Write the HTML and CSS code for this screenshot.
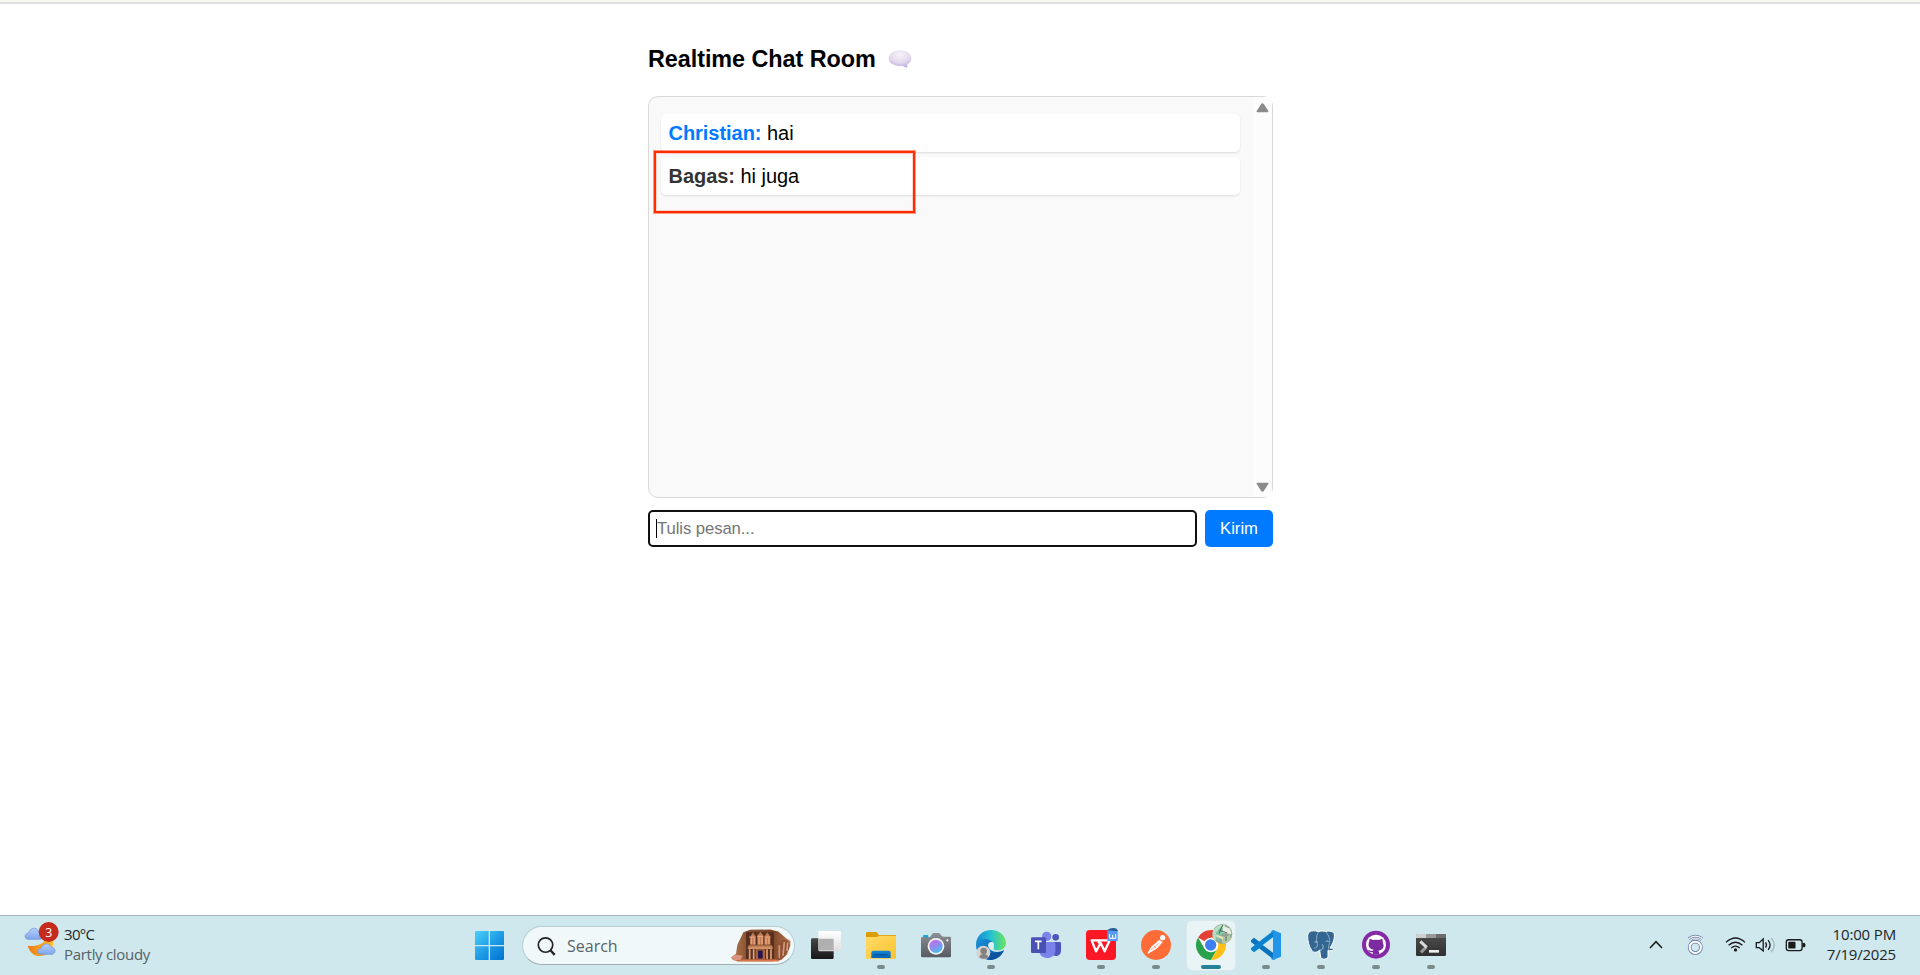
FILE: index.html
```
<!DOCTYPE html>
<html lang="id">
<head>
<meta charset="utf-8">
<title>Realtime Chat Room</title>
<link rel="stylesheet" href="styles.css">
</head>
<body>
<div class="browser-edge"></div>
<main class="page">
  <div class="room">
    <h3 class="title"><span class="title-text">Realtime Chat Room</span>
      <svg class="bubble" viewBox="0 0 72 56"><defs><radialGradient id="bub" cx=".5" cy=".25" r=".75"><stop offset="0" stop-color="#f7f2f8"/><stop offset=".6" stop-color="#e4daee"/><stop offset="1" stop-color="#bda9dc"/></radialGradient></defs><path d="M36 1C55 1 71 11 71 26c0 9-5 15-13 19l1 10c-7-1-11-3-15-6C20 52 1 42 1 26 1 11 17 1 36 1z" fill="url(#bub)"/></svg>
    </h3>
    <div class="chat">
      <div class="messages">
        <div class="message"><b class="own">Christian:</b> hai</div>
        <div class="message"><b>Bagas:</b> hi juga</div>
      </div>
      <div class="scrollbar">
        <svg viewBox="0 0 38 30" class="arrow"><path d="M3 28h32q3-1 1-5L23 3q-4-5-8 0L2 23q-2 4 1 5z"/></svg>
        <svg viewBox="0 0 38 30" class="arrow"><path d="M3 2h32q3 1 1 5L23 27q-4 5-8 0L2 7Q0 3 3 2z"/></svg>
      </div>
      <div class="highlight"></div>
    </div>
    <div class="composer">
      <div class="field"><span class="caret"></span><span class="placeholder">Tulis pesan...</span></div>
      <button class="send">Kirim</button>
    </div>
  </div>
</main>
<footer class="taskbar">
  <div class="weather">
    <svg class="weather-icon" viewBox="72 50 108 108"><defs><linearGradient id="cl" x2="0" y2="1"><stop stop-color="#b4d0fb"/><stop offset="1" stop-color="#7fa5ec"/></linearGradient><linearGradient id="mo" x2="1"><stop stop-color="#ee7a17"/><stop offset="1" stop-color="#ffc32e"/></linearGradient></defs>
      <path d="M83 124c16 4 42-2 50-14h26c4 30-20 48-44 45-16-2-27-14-32-31z" fill="url(#mo)"/>
      <path d="M84 105c-12-1-12-18 2-19 3-16 24-20 30-4 14 0 16 20 4 23z" fill="url(#cl)" stroke="#6a93dd" stroke-width="2"/>
      <path d="M122 150c-12-1-12-17 1-18 4-16 26-18 31-3 14 0 15 19 2 21z" fill="url(#cl)" stroke="#6a93dd" stroke-width="2"/>
      <circle cx="146" cy="83" r="30" fill="#c42b1c"/><text class="badge" x="146" y="97" text-anchor="middle">3</text></svg>
    <div class="weather-text"><span class="temp">30°C</span><span class="cond">Partly cloudy</span></div>
  </div>
  <div class="center">
    <svg class="start" viewBox="45 78 87 87"><defs><linearGradient id="win" gradientUnits="userSpaceOnUse" x1="45" y1="78" x2="132" y2="165"><stop stop-color="#4cd0fb"/><stop offset=".5" stop-color="#1f9de6"/><stop offset="1" stop-color="#0070d0"/></linearGradient></defs><path fill="url(#win)" d="M48 78h38v42H45V81q0-3 3-3zM90 78h39q3 0 3 3v39H90zM45 124h41v41H48q-3 0-3-3zM90 124h42v38q0 3-3 3H90z"/></svg>
    <div class="search">
      <svg class="lens" viewBox="226 90 58 60"><circle cx="252" cy="117" r="22" fill="none" stroke="#222" stroke-width="5"/><path d="M267 133l13 14" stroke="#222" stroke-width="7"/></svg>
      <span class="search-text">Search</span>
      <svg class="petra" viewBox="218 74 180 98"><defs><linearGradient id="rock" x2="1"><stop stop-color="#b77b50"/><stop offset=".25" stop-color="#8a5532"/><stop offset=".7" stop-color="#7b4527"/><stop offset="1" stop-color="#b87650"/></linearGradient></defs>
        <path d="M219 158l14-10 4-27 18-38 20-7 60-1 25 6 25 22 11 6v15l-10 26-16 16-26 4H236l-15-6z" fill="url(#rock)"/>
        <path d="M219 158l12-8 22 4-6 12-20 3z" fill="#dc9480"/>
        <path d="M263 82h84v82h-84z" fill="#57301f"/>
        <path d="M270 122h72v10h-72zM276 96l8-13 8 13v25h-16zM318 96l9-13 9 13v25h-18zM297 93l9-11 9 11v28h-18z" fill="#bf7a52"/>
        <path d="M268 131h75M273 98h18M297 96h18M320 98h16" stroke="#e6a67c" stroke-width="4"/>
        <path d="M274 134v30M286 134v30M326 134v30M338 134v30M279 101v18M288 101v18M302 100v20M311 100v20M323 101v18M332 101v18" stroke="#e3a078" stroke-width="5"/>
        <path d="M292 134h28v30h-28z" fill="#ad623c"/><path d="M299 138h14v24h-14z" fill="#24164c"/>
        <path d="M358 163l4-44 12-14 14 4 6 10-2 14-14 22z" fill="#8d5033"/><path d="M363 160v-38M374 154l4-42M386 140l2-26" stroke="#d59978" stroke-width="5"/>
        <path d="M252 165h100l14 3-6 3H236z" fill="#dc754a"/></svg>
    </div>
    <div class="apps">
      <div class="app idle"><svg viewBox="453 75 90 90"><defs><linearGradient id="tv" x2="0" y2="1"><stop stop-color="#454545"/><stop offset="1" stop-color="#181818"/></linearGradient><linearGradient id="tw" x2="0" y2="1"><stop stop-color="#fff"/><stop offset="1" stop-color="#dedede"/></linearGradient></defs><rect x="453" y="100" width="68" height="62" rx="4" fill="url(#tv)"/><rect x="475" y="78" width="68" height="61" rx="4" fill="url(#tw)"/><path d="M477 101h42q2 0 2 3v32h-44z" fill="#b0b0b0"/></svg></div>
      <div class="app"><svg viewBox="48 75 90 90"><defs><linearGradient id="fo" x2="1" y2="1"><stop stop-color="#ffdc69"/><stop offset="1" stop-color="#fcc22c"/></linearGradient><linearGradient id="fb" x2="0" y2="1"><stop stop-color="#1486d8"/><stop offset="1" stop-color="#0561b2"/></linearGradient></defs><path d="M48 84q0-3 4-3h26q5 0 8 9h52v20H48z" fill="#dc9c05"/><path d="M48 96h30q5 0 9-4h48q3 0 3 3v66H48z" fill="url(#fo)"/><path d="M64 159v-16q0-6 6-6h46q6 0 6 6v16z" fill="url(#fb)"/><path d="M72 149h40" stroke="#054f91" stroke-width="3"/></svg><i></i></div>
      <div class="app idle"><svg viewBox="213 75 90 90"><defs><linearGradient id="ca" x2="0" y2="1"><stop stop-color="#8b9096"/><stop offset="1" stop-color="#565a5f"/></linearGradient><linearGradient id="le" x1=".2" x2=".7" y2="1"><stop stop-color="#c56be0"/><stop offset=".5" stop-color="#8d8eee"/><stop offset="1" stop-color="#3fc1ed"/></linearGradient></defs><path d="M219 99v-6q0-3 4-3h8q4 0 4 4v5z" fill="#16a6dc"/><path d="M213 97h23q6 0 10-9 2-4 6-4h13q4 0 6 4 4 7 9 7h20q3 0 3 3v55q0 4-4 4h-82q-4 0-4-4z" fill="url(#ca)"/><circle cx="258" cy="124" r="25" fill="#f4f4f6"/><circle cx="258" cy="124" r="20" fill="url(#le)"/><path d="M292 102v8M288 106h8" stroke="#dce5ea" stroke-width="3"/></svg></div>
      <div class="app"><svg viewBox="378 75 90 90"><defs><linearGradient id="e1" x1="0" x2="1"><stop stop-color="#1689d4"/><stop offset=".5" stop-color="#27c2d2"/><stop offset="1" stop-color="#6be45a"/></linearGradient><linearGradient id="e2" x2="1" y2="1"><stop stop-color="#1b9be4"/><stop offset="1" stop-color="#094b98"/></linearGradient></defs><path d="M378 120c0-25 20-38 42-34 20 4 24 20 20 30-8-10-24-6-24 8 0 12 20 24 46 12-12 20-24 29-41 29-25 0-43-20-43-45z" fill="url(#e2)"/><path d="M379 113c2-22 21-38 44-38 26 0 44 18 45 38 0 20-18 25-33 22-8-2-4-5-3-12 0-20-37-30-53-10z" fill="url(#e1)"/><path d="M414 125c-5 20 22 29 48 11-8 20-24 28-42 29-16-6-18-26-6-40z" fill="#0c529f"/><path d="M415 124c-3-12 9-17 16-10 3 9-3 14 2 20-9 2-16-2-18-10z" fill="#dceff3"/><circle cx="400" cy="143" r="21" fill="#d4d4d2"/><circle cx="401" cy="138" r="10" fill="#85817e"/><path d="M388 157c0-13 27-13 26 0-8 6-18 6-26 0z" fill="#85817e"/></svg><i></i></div>
      <div class="app idle"><svg viewBox="63 75 90 90"><circle cx="137" cy="97" r="10" fill="#4d55bd"/><path d="M124 111h25q4 0 4 4v22c-1 20-24 20-29 7z" fill="#4e56be"/><circle cx="110" cy="94" r="14" fill="#7b83eb"/><path d="M88 111h43q5 0 5 5v22c0 28-48 28-48 0z" fill="#7b83eb"/><path d="M91 111h17v33H91z" fill="#5259b5"/><rect x="63" y="97" width="45" height="47" rx="4" fill="#4b50b5"/><path d="M75 109h20M85 109v24" stroke="#fff" stroke-width="5"/></svg></div>
      <div class="app"><svg viewBox="228 75 90 90"><rect x="228" y="75" width="90" height="90" rx="11" fill="#fb1724"/><path d="M269 106h-24l13 33 14-25 12 25 15-33h-29l-5 9" fill="none" stroke="#fff" stroke-width="7" stroke-linejoin="round"/><path d="M292 78q15-14 31-3v33h-31z" fill="#5799f2"/><path d="M291 76q15-12 30-4l2 7z" fill="#285b8f"/><path d="M299 87v13h18V87M308 90v10" fill="none" stroke="#fff" stroke-width="3"/></svg><i></i></div>
      <div class="app"><svg viewBox="393 75 90 90"><circle cx="438" cy="120" r="45" fill="#ff6c37"/><path d="M412 145l12-20 24-21 10 7-18 20-26 15z" fill="#fff"/><circle cx="458" cy="98" r="8" fill="#fff"/><path d="M423 135l23-20M432 124l8 6M454 108l8 4-14 13" fill="none" stroke="#ff7d4e" stroke-width="2"/></svg><i></i></div>
      <div class="app active"><svg viewBox="78 75 90 90"><circle cx="123" cy="120" r="45" fill="#fff"/><path d="M123 120L84 97.500A45 45 0 0 1 162 97.500L123 98z" fill="#e34133"/><path d="M84 97.500A45 45 0 0 0 123 165L142 131 123 142 104 131z" fill="#2aa14b"/><path d="M162 97.500A45 45 0 0 1 123 165L142 131 145 120 123 98z" fill="#fec014"/><circle cx="123" cy="120" r="22" fill="#fff"/><circle cx="122" cy="120" r="17" fill="#3f7ff0"/><circle cx="157" cy="87" r="30" fill="#8fa592"/><path d="M130 75q14-20 36-16l-12 29-19 19q-12-14-5-32z" fill="#b9dcc3"/><path d="M139 82l12-16 13 7-19 35q-12-4-6-26z" fill="#7cc4a6"/><path d="M160 62l20 9 5 17-28-5z" fill="#e8eee0"/><path d="M152 92l17 5 11-10 3 16q-10 12-25 14z" fill="#b3c6a6"/><path d="M149 76l23 8M158 60l-11 25M168 96v12" stroke="#426a58" stroke-width="3"/><path d="M139 91l19 9" stroke="#f6e3be" stroke-width="6"/></svg><i></i></div>
      <div class="app"><svg viewBox="243 75 90 90"><path d="M243 106l9-8 66 49-4 17-6-3-64-49q-2-3-1-6z" fill="#0b72bd"/><path d="M243 134l9 8 66-49-4-17-6 3-64 49q-2 3-1 6z" fill="#0a83ce"/><path d="M309 75l24 10v70l-24 10q-5-2-6-6 6 2 6-6V87q0-8-6-6 1-4 6-6z" fill="#2196e8"/><path d="M309 97v46l-31-23z" fill="#d0e8ee"/></svg><i></i></div>
      <div class="app"><svg viewBox="408 75 90 90"><path d="M424 78c10-2 16 1 22 2 8-3 17-2 22 0 11-4 22-1 25 7 2 18-9 36-13 42 6 2 10 0 12 3-4 6-13 6-18 4v18c-2 10-17 11-22 3l-3-22c-6 7-18 10-23 2-9-11-14-32-13-45 1-8 5-13 11-14z" fill="#336791" stroke="#fff" stroke-width="3"/><path d="M445 82c-8 12-5 29-3 36 2 8-5 12-10 11M468 81c9 10 13 25 10 35-2 6-3 12-2 18" fill="none" stroke="#b9cedd" stroke-width="2"/><path d="M450 135c8 2 12-9 7-17M433 112c3-3 7-2 10 0M467 110c3-3 6-2 9 0" fill="none" stroke="#e6f0f4" stroke-width="2"/></svg><i></i></div>
      <div class="app"><svg viewBox="93 75 90 90"><circle cx="138" cy="119" r="42" fill="#8529a6"/><circle cx="138" cy="119" r="30" fill="#fff"/><path d="M119 101l11 4q8-2 16 0l11-4 2 13c5 12 0 21-14 23q4 4 3 12h-20v-8c-9 2-12-3-16-7 5 0 8 5 16 3l3-3c-13-2-18-11-14-22z" fill="#7b2b9f"/></svg><i></i></div>
      <div class="app"><svg viewBox="258 75 90 90"><defs><linearGradient id="te" x2="0" y2="1"><stop stop-color="#4d4d4d"/><stop offset="1" stop-color="#303030"/></linearGradient></defs><rect x="258" y="87" width="90" height="66" rx="4" fill="url(#te)"/><path d="M258 99v-9q0-3 3-3h27v12z" fill="#cfcfcf"/><path d="M288 87h30v12h-30z" fill="#999"/><path d="M318 87h27q3 0 3 3v9h-30z" fill="#6c6c6c"/><path d="M273 142l16-16" stroke="#999" stroke-width="9"/><path d="M271 109l19 18" stroke="#d9d9d9" stroke-width="9"/><path d="M297 139h30" stroke="#eee" stroke-width="8"/></svg><i></i></div>
    </div>
  </div>
  <div class="tray">
    <svg class="chev" viewBox="54 102 48 36"><path d="M60 129l18-19 18 19" fill="none" stroke="#1a1a1a" stroke-width="4.500"/></svg>
    <svg class="orb" viewBox="168 87 57 66"><g fill="none"><path d="M176 101q20-15 41 0M184 109q13-8 26 0" stroke="#6678a2" stroke-width="8"/><path d="M176 101q20-15 41 0M184 109q13-8 26 0" stroke="#fff" stroke-width="4"/><circle cx="196" cy="127" r="17" stroke="#6678a2" stroke-width="11"/><circle cx="196" cy="127" r="17" stroke="#fff" stroke-width="6"/></g></svg>
    <svg class="wifi" viewBox="286 93 64 51"><g fill="none" stroke="#1a1a1a" stroke-width="4"><path d="M289 112q29-27 58 0M297 121q21-19 42 0M305 129q13-11 26 0"/></g><circle cx="318" cy="135" r="5" fill="#1a1a1a"/></svg>
    <svg class="sound" viewBox="376 93 64 54"><g fill="none" stroke="#1a1a1a" stroke-width="4"><path d="M380 113v15h9l12 10v-36l-12 11z"/><path d="M408 112q6 8 0 16M416 105q12 15 0 30"/><path d="M425 98q20 22 0 44" stroke="#a4bbc1"/></g></svg>
    <svg class="battery" viewBox="466 96 64 48"><rect x="470" y="104" width="48" height="33" rx="7" fill="none" stroke="#1a1a1a" stroke-width="4"/><rect x="476" y="110" width="22" height="21" rx="3" fill="#1a1a1a"/><path d="M519 114h5q4 0 4 4v5q0 4-4 4h-5z" fill="#1a1a1a"/></svg>
    <div class="clock"><span class="time">10:00 PM</span><span class="date">7/19/2025</span></div>
  </div>
</footer>
</body>
</html>
```
FILE: styles.css
```
* { box-sizing: border-box; }
body { margin: 0; height: 975px; display: flex; flex-direction: column; overflow: hidden; background: #fff; color: #000; font-family: "Liberation Sans", Arial, sans-serif; }
svg { display: block; flex: none; }
.browser-edge { height: 4px; background: #f8f7f1; border-bottom: 2px solid #e1e0e0; flex: none; }
.page { flex: 1; padding-top: 42px; }
.room { width: 625px; margin-left: 648px; }
.title { display: flex; align-items: center; gap: 12px; margin: 0 0 23px; height: 27px; font-size: 23.4px; line-height: 27px; white-space: nowrap; }
.title-text { letter-spacing: -.06px; }
.bubble { width: 24px; height: 18px; margin-bottom: 2px; }
.chat { position: relative; display: flex; height: 402px; border: 1px solid #d9d9d9; border-radius: 10px; background: #f9f9f9; }
.messages { flex: 1; padding: 17px 13px 0 12px; display: flex; flex-direction: column; gap: 5px; }
.message { height: 38px; padding: 0 7.5px; line-height: 38px; font-size: 20px; letter-spacing: -.04px; background: #fff; border-radius: 5px; box-shadow: 0 1px 2px rgba(0,0,0,.12); }
.message b { color: #333; }
.message .own { color: #007bff; }
.scrollbar { width: 19px; display: flex; flex-direction: column; justify-content: space-between; align-items: center; padding: 6px 0 5px; background: #fcfcfc; }
.arrow { width: 13px; height: 10px; fill: #8b8b8b; }
.highlight { position: absolute; left: 5px; top: 54px; width: 261px; height: 62px; border: 2px solid #ff2d00; box-shadow: 0 0 0 1px rgba(255,100,65,.65), inset 0 0 0 1px rgba(255,120,90,.3); }
.composer { display: flex; gap: 8px; margin-top: 12px; height: 37px; }
.field { flex: 1; display: flex; align-items: center; border: 2px solid #101010; border-radius: 5px; padding-left: 6px; font-size: 16.67px; color: #757575; }
.placeholder { letter-spacing: -.07px; }
.caret { width: 1px; height: 19px; background: #000; }
.send { width: 68px; padding: 0; border: 0; border-radius: 5px; background: #007bff; color: #fff; font: 16.67px "Liberation Sans", Arial, sans-serif; }
.taskbar { height: 60px; flex: none; display: flex; border-top: 1px solid #a5b2b9; background: #cfe8ee; font-family: "Open Sans", "Noto Sans", sans-serif; font-size: 15px; }
.weather { width: 474px; flex: none; display: flex; padding: 5px 0 0 24px; gap: 4px; }
.weather-icon { width: 36px; height: 36px; }
.badge { font: 37px "Open Sans", sans-serif; fill: #fff; }
.weather-text, .clock { display: flex; flex-direction: column; line-height: 20px; padding-top: 3px; white-space: nowrap; }
.weather-text { color: #22282a; }
.weather-text .cond { color: #566265; }
.temp { letter-spacing: -.7px; }
.cond { letter-spacing: -.3px; }
.time { letter-spacing: -.15px; }
.date { letter-spacing: -.2px; }
.center { flex: none; display: flex; align-items: flex-start; }
.start { width: 29px; height: 29px; margin: 15px 18px 0 1px; }
.search { width: 273px; flex: none; height: 39px; margin-top: 10px; padding: 0 3px 0 14px; display: flex; align-items: center; border: 1px solid #b8ced4; border-bottom-color: #9fb1b6; border-radius: 20px; background: #f0f8fa; color: #596467; font-size: 16px; }
.lens { width: 19px; height: 20px; }
.search-text { margin: 0 auto 0 11px; }
.petra { width: 60px; height: 33px; }
.apps { display: flex; padding: 5px 0 0 7px; }
.app { width: 48px; height: 49px; margin-right: 7px; padding-top: 9px; display: flex; flex-direction: column; align-items: center; border-radius: 5px; }
.app svg { width: 30px; height: 30px; overflow: visible; }
.app i { width: 8px; height: 4px; margin-top: 5px; border-radius: 2px; background: #7b898b; }
.app.active { background: #e9f4f7; box-shadow: 0 0 0 1px #dbe9ed; }
.app.active i { width: 20px; background: #268397; }
.tray { width: 272px; flex: none; margin-left: auto; display: flex; align-items: flex-start; padding-right: 24px; }
.chev { width: 16px; height: 12px; margin: 23px 22px 0 0; }
.orb { width: 19px; height: 22px; margin: 18px 20px 0 0; }
.wifi { width: 21px; height: 17px; margin: 20px 9px 0 0; }
.sound { width: 21px; height: 18px; margin: 20px 9px 0 0; }
.battery { width: 21px; height: 16px; margin: 21px 0 0; }
.clock { margin-left: auto; padding-top: 8px; align-items: flex-end; color: #202526; }
```
